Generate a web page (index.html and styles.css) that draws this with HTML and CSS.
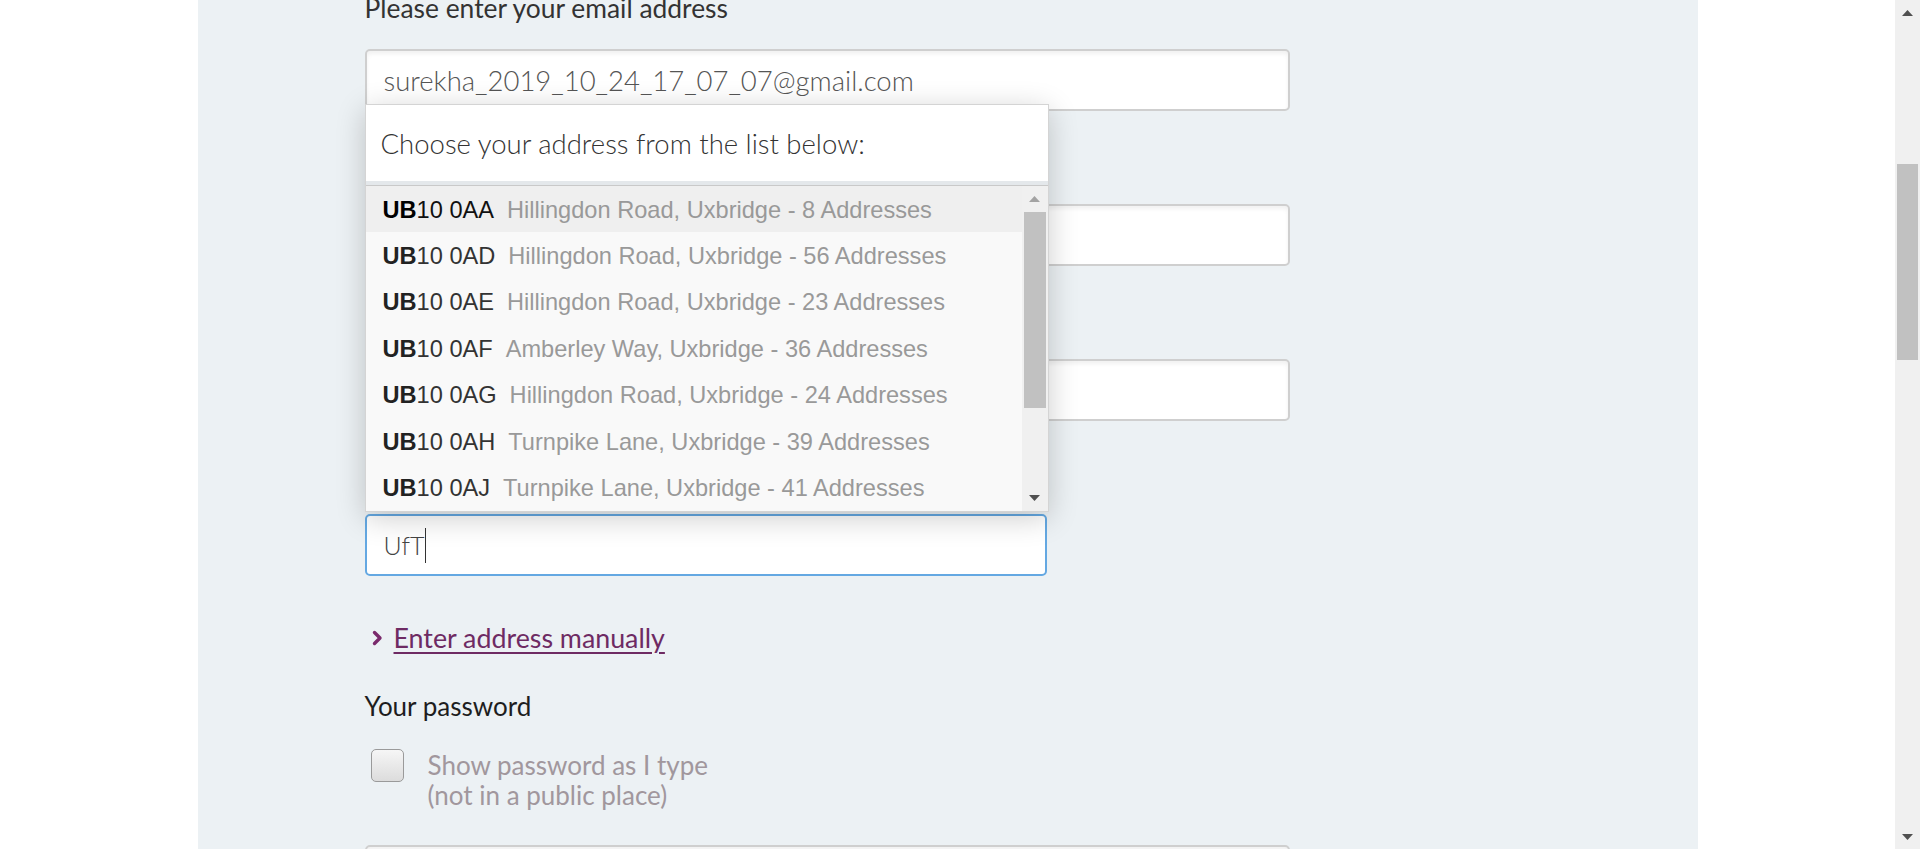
FILE: index.html
```html
<!DOCTYPE html>
<html lang="en">
<head>
<meta charset="utf-8">
<title>Register</title>
<link rel="stylesheet" href="styles.css">
</head>
<body>
<div class="app">
  <main class="page">
    <div class="panel">
      <form class="form">
        <div class="field">
          <label class="label">Please enter your email address</label>
          <div class="input"><span class="value">surekha_2019_10_24_17_07_07@gmail.com</span></div>
        </div>
        <div class="field">
          <label class="label" aria-label="First name"></label>
          <div class="input"></div>
        </div>
        <div class="field">
          <label class="label" aria-label="Last name"></label>
          <div class="input"></div>
        </div>
        <div class="field last">
          <label class="label" aria-label="Postcode"></label>
          <div class="input-wrap">
            <div class="dropdown">
              <div class="dd-head">Choose your address from the list below:</div>
              <div class="dd-body">
                <ul class="dd-list">
                  <li class="dd-row active"><span class="code"><b>UB</b>10 0AA</span><span class="addr">Hillingdon Road, Uxbridge - 8 Addresses</span></li>
                  <li class="dd-row"><span class="code"><b>UB</b>10 0AD</span><span class="addr">Hillingdon Road, Uxbridge - 56 Addresses</span></li>
                  <li class="dd-row"><span class="code"><b>UB</b>10 0AE</span><span class="addr">Hillingdon Road, Uxbridge - 23 Addresses</span></li>
                  <li class="dd-row"><span class="code"><b>UB</b>10 0AF</span><span class="addr">Amberley Way, Uxbridge - 36 Addresses</span></li>
                  <li class="dd-row"><span class="code"><b>UB</b>10 0AG</span><span class="addr">Hillingdon Road, Uxbridge - 24 Addresses</span></li>
                  <li class="dd-row"><span class="code"><b>UB</b>10 0AH</span><span class="addr">Turnpike Lane, Uxbridge - 39 Addresses</span></li>
                  <li class="dd-row"><span class="code"><b>UB</b>10 0AJ</span><span class="addr">Turnpike Lane, Uxbridge - 41 Addresses</span></li>
                </ul>
                <div class="sbar small">
                  <div class="sbtn"><svg width="11" height="6" viewBox="0 0 11 6"><polygon points="0,6 5.5,0 11,6" fill="#a3a3a3"/></svg></div>
                  <div class="strack"><div class="sthumb dd-thumb"></div></div>
                  <div class="sbtn"><svg width="11" height="6" viewBox="0 0 11 6"><polygon points="0,0 11,0 5.5,6" fill="#505050"/></svg></div>
                </div>
              </div>
            </div>
            <div class="input focused"><span class="value">UfT</span><span class="caret"></span></div>
          </div>
        </div>
        <a class="manual" href="#"><svg class="chev" width="11" height="16" viewBox="0 0 11 16"><path d="M2.5 2.5 L8 8 L2.5 13.5" fill="none" stroke="#7a2a6c" stroke-width="3.4" stroke-linecap="round" stroke-linejoin="round"/></svg><span class="manual-text">Enter address manually</span></a>
        <div class="label pw-label">Your password</div>
        <div class="checkrow">
          <span class="checkbox"></span>
          <span class="check-text">Show password as I type<br>(not in a public place)</span>
        </div>
        <div class="input"></div>
      </form>
    </div>
  </main>
  <div class="sbar page-sbar">
    <div class="sbtn"><svg width="11" height="6" viewBox="0 0 11 6"><polygon points="0,6 5.5,0 11,6" fill="#505050"/></svg></div>
    <div class="strack"><div class="sthumb page-thumb"></div></div>
    <div class="sbtn"><svg width="11" height="6" viewBox="0 0 11 6"><polygon points="0,0 11,0 5.5,6" fill="#505050"/></svg></div>
  </div>
</div>
</body>
</html>
```
FILE: styles.css
```css
* { box-sizing: border-box; }
html, body { margin: 0; padding: 0; height: 100%; overflow: hidden; }
body { font-family: "Lato", "Liberation Sans", sans-serif; background: #fff; }

.app { display: flex; height: 849px; }
.page { flex: 1; background: #fff; overflow: hidden; }
.panel {
  width: 1500px;
  margin: 0 auto;
  height: 100%;
  background: #ecf1f4;
  padding-left: 167px;
  display: flex;
  flex-direction: column;
}
.form { display: flex; flex-direction: column; margin-top: -7px; width: 925px; }

.field { display: flex; flex-direction: column; margin-bottom: 37px; }
.field.last { margin-bottom: 0; }
.label {
  display: block;
  min-height: 30px;
  font-size: 26.4px;
  line-height: 30px;
  color: #333;
  margin-bottom: 26px;
}
.input {
  height: 62px;
  border: 2px solid #cfcfcf;
  border-radius: 5px;
  background: #fff;
  box-shadow: inset 0 3px 4px rgba(0,0,0,0.06);
  display: flex;
  align-items: center;
  padding-left: 17px;
}
.value { font-weight: 300; font-size: 27.5px; color: #555; }
.input-wrap { position: relative; width: 682px; }
.input.focused { border-color: #64a8e2; box-shadow: none; }
.focused .value { font-size: 25px; color: #444; }
.caret { display: inline-block; width: 1px; height: 35px; background: #333; margin-left: 1px; }

.dropdown {
  position: absolute;
  left: 0;
  bottom: calc(100% + 2px);
  width: 684px;
  background: #fff;
  border: 1px solid #d4d4d4;
  box-shadow: 0 6px 28px rgba(0,0,0,0.2);
  z-index: 5;
}
.dd-head {
  height: 80px;
  padding-left: 15px;
  display: flex;
  align-items: center;
  font-size: 27.5px;
  font-weight: 300;
  color: #333;
  border-bottom: 4px solid #e4e8eb;
  box-shadow: 0 1px 0 #c9c9c9;
}
.dd-body { display: flex; height: 325px; margin-top: 1px; }
.dd-list {
  flex: 1;
  list-style: none;
  margin: 0;
  padding: 0;
  overflow: hidden;
  background: #f9f9f9;
}
.dd-row {
  height: 46.4px;
  display: flex;
  align-items: center;
  padding-left: 17px;
  padding-top: 2px;
  font-family: "Liberation Sans", Arial, sans-serif;
  font-size: 23.6px;
  white-space: nowrap;
}
.dd-row.active { background: #efefef; }
.code { color: #333; }
.code b { color: #222; }
.active .code { color: #111; }
.active .code b { color: #000; }
.addr { color: #999; margin-left: 13px; }

.sbar { display: flex; flex-direction: column; background: #f0f0f0; }
.sbar.small { width: 26px; }
.sbtn { height: 26px; display: flex; align-items: center; justify-content: center; flex: none; }
.strack { flex: 1; padding: 0 2px; }
.sthumb { background: #c1c1c1; }
.dd-thumb { height: 196px; }
.page-sbar { width: 25px; height: 849px; }
.page-sbar .sbtn { height: 25px; }
.page-thumb { height: 196px; margin-top: 139px; }

.manual {
  display: flex;
  align-items: center;
  margin-top: 47px;
  padding-left: 7px;
  height: 30px;
  text-decoration: none;
}
.chev { flex: none; margin-right: 11px; }
.manual-text {
  font-size: 26.8px;
  line-height: 30px;
  color: #6e2b63;
  text-decoration: underline;
  text-decoration-thickness: 2px;
  text-underline-offset: 4px;
}
.pw-label { margin-top: 38px; margin-bottom: 28px; color: #1e1e1e; font-size: 26px; }
.checkrow { display: flex; align-items: flex-start; padding-left: 6px; margin-bottom: 35px; }
.checkbox {
  width: 33px;
  height: 33px;
  flex: none;
  border: 1px solid #9a9a9a;
  border-radius: 5px;
  background: linear-gradient(#f6f6f6, #dcdcdc);
}
.check-text {
  margin-left: 24px;
  margin-top: 1px;
  font-size: 26px;
  line-height: 30px;
  color: #a1979d;
}
```
